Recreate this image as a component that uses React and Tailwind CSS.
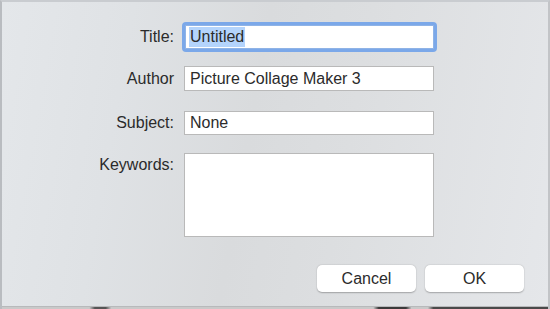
export default function App() {
  const font = { fontFamily: '"Liberation Sans", Arial, sans-serif' };
  return (
    <div
      className="relative w-[550px] h-[309px] overflow-hidden flex flex-col border-t-[2px] border-t-[#c9ccd0] border-l-[2px] border-l-[#b9bcc0] border-r-[2px] border-r-[#c2c4c7] bg-[linear-gradient(100deg,#e4e7ea_0%,#dfe2e5_22%,#d9dbdd_45%,#dcdee0_62%,#e5e7ea_100%)] text-[#2b2b2b]"
      style={font}
    >
      <div className="flex-1 flex flex-col pt-[20px]">
        {/* Title */}
        <div className="grid grid-cols-[172px_252px] gap-x-[10px] items-center">
          <div className="text-right text-[16px] leading-[20px]">Title:</div>
          <div className="h-[30px] rounded-[4px] bg-[#7ba8e9] p-[3px] -ml-[2px] w-[255px]">
            <div className="h-full bg-white border border-[#8fb3e6] flex items-center pl-[3px]">
              <span className="bg-[#b4d4fc] text-[16px] leading-[20px] px-[1px]">Untitled</span>
            </div>
          </div>
        </div>
        {/* Author */}
        <div className="grid grid-cols-[172px_250px] gap-x-[10px] items-center mt-[14px]">
          <div className="text-right text-[16px] leading-[20px]">Author</div>
          <div className="h-[25px] bg-white border border-[#b9b9b9] flex items-center pl-[5px] text-[16px] leading-[20px]">
            Picture Collage Maker 3
          </div>
        </div>
        {/* Subject */}
        <div className="grid grid-cols-[172px_250px] gap-x-[10px] items-center mt-[20px]">
          <div className="text-right text-[16px] leading-[20px]">Subject:</div>
          <div className="h-[24px] bg-white border border-[#b9b9b9] flex items-center pl-[5px] text-[16px] leading-[20px]">
            None
          </div>
        </div>
        {/* Keywords */}
        <div className="grid grid-cols-[172px_250px] gap-x-[10px] items-start mt-[18px]">
          <div className="text-right text-[16px] leading-[20px] pt-[2px]">Keywords:</div>
          <div className="h-[84px] bg-white border border-[#b9b9b9]"></div>
        </div>
        {/* Buttons */}
        <div className="flex justify-end gap-[9px] pr-[24px] mt-[28px]">
          <button className="w-[99px] h-[27px] rounded-[5px] bg-white text-[16px] leading-[20px] text-[#2b2b2b] shadow-[0_0.5px_1.5px_rgba(0,0,0,0.28)]">
            Cancel
          </button>
          <button className="w-[99px] h-[27px] rounded-[5px] bg-white text-[16px] leading-[20px] text-[#2b2b2b] shadow-[0_0.5px_1.5px_rgba(0,0,0,0.28)]">
            OK
          </button>
        </div>
      </div>
      <div className="h-[1px] bg-[#b8b9bb]"></div>
      <div className="h-[2px] bg-[linear-gradient(90deg,#c9c9c9_0%,#c9c9c9_16%,#555_17%,#555_19%,#c9c9c9_20%,#c9c9c9_68%,#3a3a3a_69%,#3a3a3a_74%,#c9c9c9_75%,#c9c9c9_78%,#4a4a4a_79%,#4a4a4a_100%)]"></div>
    </div>
  );
}
